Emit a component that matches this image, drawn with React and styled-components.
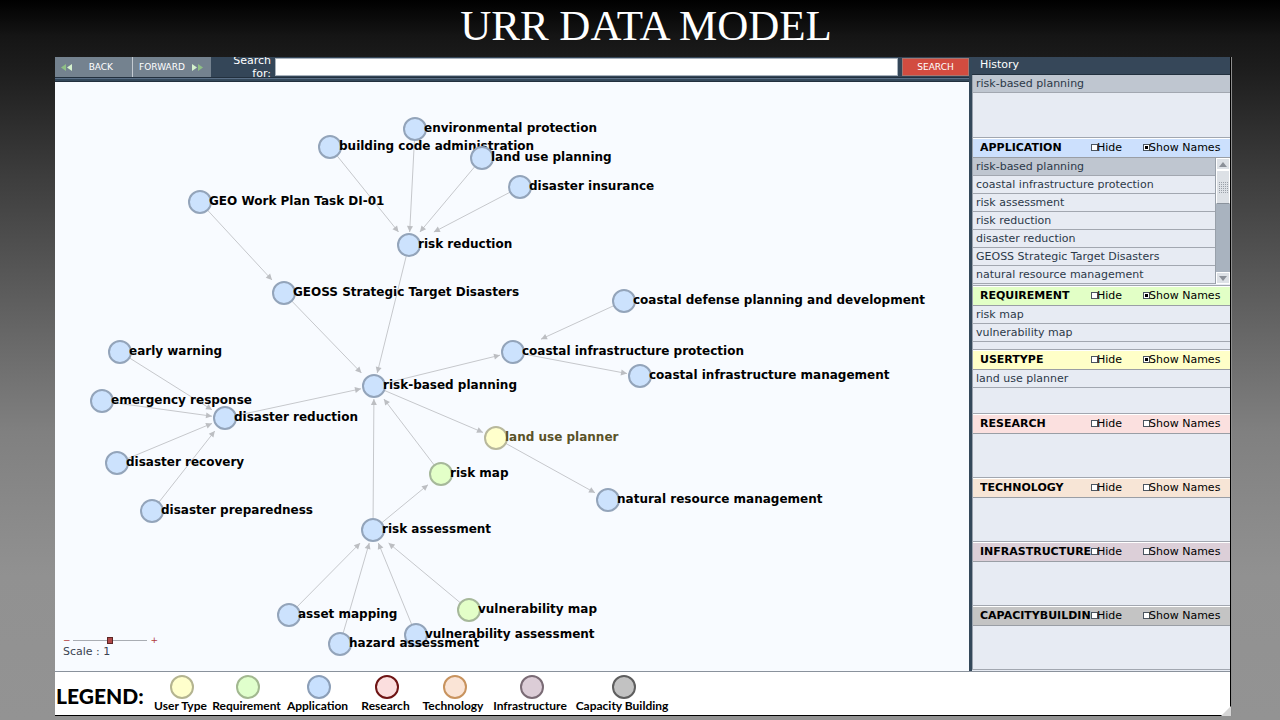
import React, { useState } from 'react';
import styled, { createGlobalStyle } from 'styled-components';

const GlobalStyle = createGlobalStyle`
  * { box-sizing: border-box; }
  body {
    margin: 0;
    font-family: "DejaVu Sans", Verdana, sans-serif;
    font-size: 11px;
    color: #000;
  }
`;

const Page = styled.div`
  display: flex;
  flex-direction: column;
  min-height: 100vh;
  padding: 0 49px 4px 55px;
  background: linear-gradient(#000 0%, #151515 5%, #1e1e1e 10%, #3c3c3c 24%, #6a6a6a 48%, #808080 60%, #919191 80%, #939393 100%);
`;

const Title = styled.h1`
  margin: 0;
  height: 57px;
  padding-left: 6px;
  font: 43px/52px "Liberation Serif", "Times New Roman", serif;
  text-align: center;
  color: #fff;
`;

const Window = styled.div`
  position: relative;
  flex: 1;
  display: flex;
  flex-direction: column;
  background: #fff;
  border-right: 1px solid #000;
  border-bottom: 1px solid #000;
  box-shadow: 1px 0 #8e8e8e;
`;

const Body = styled.div`
  flex: 1;
  display: flex;
  border-bottom: 1px solid #8a929c;
`;

const Main = styled.div`
  flex: 1;
  min-width: 0;
  display: flex;
  flex-direction: column;
`;

const Toolbar = styled.form`
  display: flex;
  height: 25px;
  padding-bottom: 5px;
  background: linear-gradient(#344658 20px, #22303e 20px, #22303e 21px, #5a6f86 21px, #5a6f86 22px, #34485a 22px, #34485a 24px, #22303e 24px);
`;

const NavButton = styled.button`
  display: flex;
  align-items: center;
  justify-content: space-between;
  width: ${p => p.$width}px;
  padding: 0 ${p => p.$end}px 0 6px;
  border: 0;
  border-right: 1px solid ${p => p.$line};
  background: #74828f;
  font: 9px "DejaVu Sans", Verdana, sans-serif;
  color: #fff;
`;

const SearchLabel = styled.label`
  width: 60px;
  height: 20px;
  padding-left: 12px;
  overflow: hidden;
  display: flex;
  align-items: center;
  justify-content: flex-end;
  line-height: 13px;
  text-align: right;
  color: #fff;
`;

const SearchInput = styled.input`
  flex: 1;
  min-width: 0;
  height: 18px;
  margin: 1px 4px 0;
  border: 1px solid #a9b3bd;
  background: #fff;
`;

const SearchButton = styled.button`
  width: 67px;
  height: 18px;
  margin-top: 1px;
  padding: 0;
  border: 1px solid #a8766f;
  background: #d24c40;
  font: 9px "DejaVu Sans", Verdana, sans-serif;
  color: #fff;
`;

const Canvas = styled.div`
  position: relative;
  flex: 1;
  overflow: hidden;
  background: #f8fbff;
`;

const Edges = styled.svg`
  position: absolute;
  width: 100%;
  height: 100%;
`;

const Node = styled.div`
  position: absolute;
  display: flex;
  align-items: center;
  height: 24px;
  font-size: 12px;
  font-weight: bold;
  white-space: nowrap;
  color: ${p => p.$ink || '#000'};
`;

const Dot = styled.span`
  flex: none;
  width: 24px;
  height: 24px;
  margin-right: -3px;
  border: 2px solid ${p => p.$line};
  border-radius: 50%;
  background: ${p => p.$fill};
`;

const NodeName = styled.span`
  position: relative;
  line-height: 14px;
  padding-bottom: 2px;
`;

const Scale = styled.div`
  position: absolute;
  left: 8px;
  bottom: 12px;
  line-height: 14px;
  color: #3b4350;
`;

const ScaleRow = styled.div`
  display: flex;
  align-items: center;
  height: 10px;
  font-size: 9px;
  color: #b03a3a;
`;

const Range = styled.input`
  appearance: none;
  width: 74px;
  height: 8px;
  margin: 0 4px 0 2px;
  background: linear-gradient(#a9adb3, #a9adb3) center / 100% 1px no-repeat;
  &::-webkit-slider-thumb {
    appearance: none;
    width: 6px;
    height: 7px;
    border: 1px solid #5c2525;
    background: #b04848;
  }
`;

const Side = styled.aside`
  width: 261px;
  border-left: 3px solid #34485a;
  background: #e7ebf3;
`;

const HistoryTitle = styled.h2`
  margin: 0;
  height: 18px;
  padding-left: 8px;
  border-bottom: 1px solid #22303e;
  background: #364759;
  font-size: 11px;
  font-weight: normal;
  line-height: 15px;
  color: #fff;
`;

const Section = styled.section`
  height: ${p => p.$height}px;
  border-left: 1px solid #9aa2ad;
  border-bottom: 1px solid #a2a7b0;
`;

const SectionHead = styled.div`
  display: grid;
  grid-template-columns: 111px 52px 1fr;
  align-items: center;
  height: 20px;
  padding: 0 0 1px 7px;
  border-top: 1px solid #fff;
  border-bottom: 1px solid #9a9ea5;
  background: ${p => p.$fill};
`;

const SectionName = styled.h3`
  margin: 0;
  overflow: hidden;
  font-size: 11px;
  line-height: 16px;
`;

const Toggle = styled.label`
  display: flex;
  align-items: center;
  line-height: 16px;
  white-space: nowrap;
`;

const Box = styled.input`
  appearance: none;
  flex: none;
  width: 7px;
  height: 7px;
  margin: 0 -1px 0 0;
  border: 1px solid #4a5560;
  background: #fff;
  &:checked { box-shadow: inset 0 0 0 1px #fff; background: #000; }
`;

const Scroller = styled.div`
  display: flex;
`;

const List = styled.ul`
  flex: 1;
  margin: 0;
  padding: 0;
  list-style: none;
`;

const Item = styled.li`
  height: 18px;
  padding-left: 3px;
  border-bottom: 1px solid #a2a7b0;
  background: ${p => (p.$selected ? '#bfc6d0' : 'transparent')};
  line-height: 17px;
  color: #2c3949;
`;

const ScrollTrack = styled.div`
  display: flex;
  flex-direction: column;
  width: 15px;
  border-left: 1px solid #98a0aa;
  background: #a9b3bf;
`;

const ScrollButton = styled.button`
  display: grid;
  place-items: center;
  width: 14px;
  height: 12px;
  padding: 0;
  border: 1px solid #fff;
  background: #dde1e6;
`;

const Thumb = styled.div`
  display: grid;
  place-items: center;
  height: 34px;
  margin-bottom: auto;
  border: 1px solid #fff;
  border-bottom: 1px solid #8a929c;
  background: #dde1e6;
`;

const Legend = styled.footer`
  display: flex;
  align-items: flex-start;
  height: 43px;
  padding-left: 1px;
  font-family: Lato, sans-serif;
`;

const LegendTitle = styled.h2`
  margin: 0;
  width: 96px;
  font-size: 21px;
  line-height: 48px;
  font-weight: 900;
`;

const Key = styled.div`
  display: flex;
  flex-direction: column;
  align-items: center;
  width: ${p => p.$width}px;
  padding-top: 3px;
  font-size: 12px;
  font-weight: bold;
  line-height: 14px;
  white-space: nowrap;
`;

const Grip = styled.svg`
  position: absolute;
  right: -1px;
  bottom: -1px;
`;

const kinds = {
  user: { fill: '#ffffcc', line: '#b8b89c' },
  req: { fill: '#e3ffc8', line: '#a6b89a' },
  app: { fill: '#cce2fd', line: '#93a4ba' },
};

// positions are centres, in canvas pixels
const nodes = {
  env: [360, 47, 'environmental protection'],
  code: [275, 65, 'building code administration'],
  land: [427, 76, 'land use planning'],
  insurance: [465, 105, 'disaster insurance'],
  geo: [145, 120, 'GEO Work Plan Task DI-01'],
  riskRed: [354, 163, 'risk reduction'],
  geoss: [229, 211, 'GEOSS Strategic Target Disasters'],
  defense: [569, 219, 'coastal defense planning and development'],
  infra: [458, 270, 'coastal infrastructure protection'],
  manage: [585, 294, 'coastal infrastructure management'],
  planning: [319, 304, 'risk-based planning'],
  early: [65, 270, 'early warning'],
  emergency: [47, 319, 'emergency response'],
  disRed: [170, 336, 'disaster reduction'],
  recovery: [62, 381, 'disaster recovery'],
  prepared: [97, 429, 'disaster preparedness'],
  planner: [441, 356, 'land use planner', 'user'],
  riskMap: [386, 392, 'risk map', 'req'],
  natural: [553, 418, 'natural resource management'],
  assess: [318, 448, 'risk assessment'],
  asset: [234, 533, 'asset mapping'],
  vulnAssess: [361, 553, 'vulnerability assessment'],
  hazard: [285, 562, 'hazard assessment'],
  vulnMap: [414, 528, 'vulnerability map', 'req'],
};

const edges = [
  ['env', 'riskRed'], ['code', 'riskRed'], ['land', 'riskRed'], ['insurance', 'riskRed'],
  ['geo', 'geoss'], ['geoss', 'planning'], ['riskRed', 'planning'],
  ['defense', 'infra'], ['infra', 'manage'], ['planning', 'infra'],
  ['early', 'disRed'], ['emergency', 'disRed'], ['recovery', 'disRed'], ['prepared', 'disRed'],
  ['disRed', 'planning'], ['planning', 'planner'], ['planner', 'natural'],
  ['riskMap', 'planning'], ['assess', 'planning'], ['assess', 'riskMap'],
  ['asset', 'assess'], ['hazard', 'assess'], ['vulnAssess', 'assess'], ['vulnMap', 'assess'],
];

const sections = [
  { name: 'APPLICATION', fill: '#cce0fd', height: 148, show: true, scroll: true,
    items: ['risk-based planning', 'coastal infrastructure protection', 'risk assessment', 'risk reduction',
      'disaster reduction', 'GEOSS Strategic Target Disasters', 'natural resource management'] },
  { name: 'REQUIREMENT', fill: '#e2ffc6', height: 64, show: true, items: ['risk map', 'vulnerability map'] },
  { name: 'USERTYPE', fill: '#ffffc8', height: 64, show: true, items: ['land use planner'] },
  { name: 'RESEARCH', fill: '#fbe0df', height: 64 },
  { name: 'TECHNOLOGY', fill: '#f7e5d6', height: 64 },
  { name: 'INFRASTRUCTURE', fill: '#dccfd8', height: 64 },
  { name: 'CAPACITYBUILDING', fill: '#c4c4c4', height: 64 },
];

const legend = [
  ['User Type', '#ffffcc', '#b4b490', 57],
  ['Requirement', '#e0ffcc', '#a2b890', 75],
  ['Application', '#c8e0fe', '#8c9fb8', 67],
  ['Research', '#fbdede', '#6e1414', 69],
  ['Technology', '#fae4d6', '#c8935e', 66],
  ['Infrastructure', '#dccdd7', '#7a6b75', 88],
  ['Capacity Building', '#c2c2c2', '#5e5e5e', 96],
];

// the arrow stops at the box round the target, which is wider on the label side
const Edge = ({ from, to }) => {
  const [x1, y1] = nodes[from];
  const [x2, y2] = nodes[to];
  const dx = x1 - x2;
  const dy = y1 - y2;
  const t = Math.min((dx > 0 ? 28 : 13) / Math.abs(dx || 1), 13 / Math.abs(dy || 1));
  const x = x2 + dx * t;
  const y = y2 + dy * t;
  const angle = Math.atan2(-dy, -dx) * 180 / Math.PI;
  return (
    <g>
      <line x1={x1} y1={y1} x2={x} y2={y} stroke="#c6c8cc" />
      <path d="M0 0L-6 -3V3Z" fill="#bcbec2" transform={`translate(${x} ${y}) rotate(${angle})`} />
    </g>
  );
};

const Arrows = ({ flip }) => (
  <svg width="11" height="7" viewBox="0 0 11 7">
    <path d={flip ? 'M6 0V7L11 3.5Z' : 'M5 0V7L0 3.5Z'} fill="#8fbf86" />
    <path d={flip ? 'M0 0V7L5 3.5Z' : 'M11 0V7L6 3.5Z'} fill="#d5f2cd" />
  </svg>
);

const Triangle = ({ down }) => (
  <svg width="8" height="5" viewBox="0 0 8 5">
    <path d={down ? 'M0 0H8L4 5Z' : 'M0 5H8L4 0Z'} fill="#8b9098" />
  </svg>
);

const Items = ({ items, selected }) => (
  <List>
    {items.map(item => <Item key={item} $selected={item === selected}>{item}</Item>)}
  </List>
);

const SidePanel = ({ name, fill, height, show, scroll, items = [] }) => (
  <Section $height={height}>
    <SectionHead $fill={fill}>
      <SectionName>{name}</SectionName>
      <Toggle><Box type="checkbox" />Hide</Toggle>
      <Toggle><Box type="checkbox" defaultChecked={show} />Show Names</Toggle>
    </SectionHead>
    <Scroller>
      <Items items={items} selected="risk-based planning" />
      {scroll && (
        <ScrollTrack>
          <ScrollButton type="button" aria-label="Scroll up"><Triangle /></ScrollButton>
          <Thumb>
            <svg width="9" height="11" viewBox="0 0 9 11">
              {[0, 2, 4, 6, 8, 10].map(y => (
                <path key={y} d={`M0 ${y + 0.5}H9`} stroke="#9aa0a8" strokeDasharray="1 1" />
              ))}
            </svg>
          </Thumb>
          <ScrollButton type="button" aria-label="Scroll down"><Triangle down /></ScrollButton>
        </ScrollTrack>
      )}
    </Scroller>
  </Section>
);

function App() {
  const [query, setQuery] = useState('');
  const [scale, setScale] = useState(1);

  return (
    <Page>
      <GlobalStyle />
      <Title>URR DATA MODEL</Title>
      <Window>
        <Body>
          <Main>
            <Toolbar onSubmit={e => e.preventDefault()}>
              <NavButton type="button" $width={78} $end={19} $line="#c3cad1"><Arrows />BACK</NavButton>
              <NavButton type="button" $width={78} $end={7} $line="#74828f">FORWARD<Arrows flip /></NavButton>
              <SearchLabel htmlFor="search">Search for:</SearchLabel>
              <SearchInput id="search" value={query} onChange={e => setQuery(e.target.value)} />
              <SearchButton>SEARCH</SearchButton>
            </Toolbar>
            <Canvas>
              <Edges>
                {edges.map(([from, to]) => <Edge key={from + to} from={from} to={to} />)}
              </Edges>
              {Object.entries(nodes).map(([id, [x, y, name, kind = 'app']]) => (
                <Node key={id} style={{ left: x - 12, top: y - 12 }} $ink={kind === 'user' ? '#5a5228' : ''}>
                  <Dot $fill={kinds[kind].fill} $line={kinds[kind].line} />
                  <NodeName>{name}</NodeName>
                </Node>
              ))}
              <Scale>
                <ScaleRow>
                  −
                  <Range id="scale" type="range" min="0" max="2" step="0.1" value={scale}
                    onChange={e => setScale(e.target.value)} />
                  +
                </ScaleRow>
                <label htmlFor="scale">Scale : {scale}</label>
              </Scale>
            </Canvas>
          </Main>
          <Side>
            <HistoryTitle>History</HistoryTitle>
            <Section $height={63}>
              <Items items={['risk-based planning']} selected="risk-based planning" />
            </Section>
            {sections.map(s => <SidePanel key={s.name} {...s} />)}
          </Side>
        </Body>
        <Legend>
          <LegendTitle>LEGEND:</LegendTitle>
          {legend.map(([name, fill, line, width]) => (
            <Key key={name} $width={width}><Dot $fill={fill} $line={line} />{name}</Key>
          ))}
        </Legend>
        <Grip width="10" height="10" viewBox="0 0 10 10">
          <path d="M10 0V10H0Z" fill="#d6d6d6" />
        </Grip>
      </Window>
    </Page>
  );
}

export default App;
